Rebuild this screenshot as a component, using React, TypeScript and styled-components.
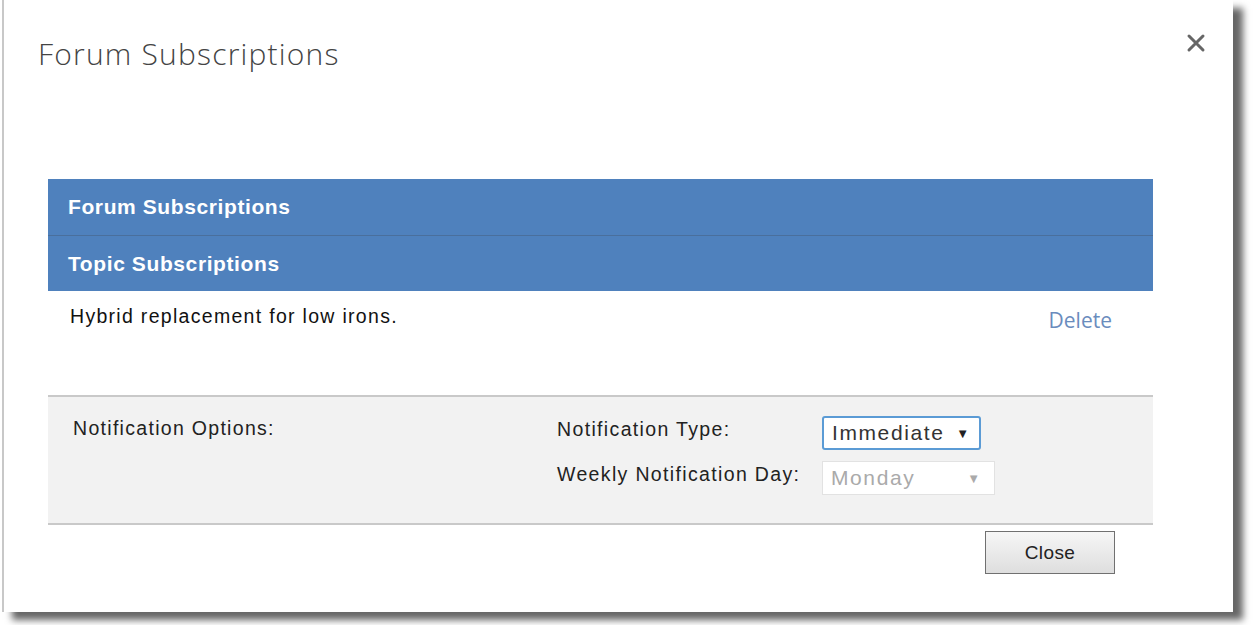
import React from 'react'
import styled, { createGlobalStyle } from 'styled-components'

const GlobalStyle = createGlobalStyle`
	html, body {
		margin: 0;
		padding: 0;
		background: #fff;
	}
	body {
		font-family: 'Liberation Sans', Arial, sans-serif;
		overflow: hidden;
	}
`

const App = (): JSX.Element => {
	return (
		<>
			<GlobalStyle />
			<Page>
				<Dialog>
					<TitleRow>
						<Title>Forum Subscriptions</Title>
						<CloseX aria-label="Close">
							<svg width="20" height="20" viewBox="0 0 20 20">
								<path d="M3 3 L17 17 M17 3 L3 17" stroke="#666" strokeWidth="3" strokeLinecap="round" />
							</svg>
						</CloseX>
					</TitleRow>
					<Content>
						<SectionHeader>Forum Subscriptions</SectionHeader>
						<SectionHeader divider>Topic Subscriptions</SectionHeader>
						<TopicRow>
							<TopicName>Hybrid replacement for low irons.</TopicName>
							<DeleteLink href="#">Delete</DeleteLink>
						</TopicRow>
						<OptionsPanel>
							<OptionsLabel>Notification Options:</OptionsLabel>
							<OptionsGrid>
								<FieldLabel>Notification Type:</FieldLabel>
								<Select active>
									<span>Immediate</span>
									<Arrow>▼</Arrow>
								</Select>
								<FieldLabel>Weekly Notification Day:</FieldLabel>
								<Select wide disabled>
									<span>Monday</span>
									<Arrow disabled>▼</Arrow>
								</Select>
							</OptionsGrid>
						</OptionsPanel>
						<Footer>
							<Button>Close</Button>
						</Footer>
					</Content>
				</Dialog>
			</Page>
		</>
	)
}

export default App

const Page = styled.div`
	width: 1260px;
	height: 625px;
	padding-left: 2px;
	box-sizing: border-box;
`

const Dialog = styled.div`
	width: 1231px;
	height: 612px;
	box-sizing: border-box;
	background: #fff;
	border-left: 2px solid #c8c8c8;
	box-shadow: 10px 8px 7px rgba(0, 0, 0, 0.6);
	display: flex;
	flex-direction: column;
`

const TitleRow = styled.div`
	display: flex;
	justify-content: space-between;
	align-items: flex-start;
	padding: 33px 26px 0 34px;
	height: 179px;
	box-sizing: border-box;
`

const Title = styled.h1`
	margin: 0;
	font-family: 'Open Sans', sans-serif;
	font-weight: 300;
	font-size: 30px;
	line-height: 42px;
	color: #444;
	letter-spacing: 1.2px;
`

const CloseX = styled.button`
	border: none;
	background: none;
	padding: 0;
	margin-top: -1px;
	width: 22px;
	height: 22px;
	display: flex;
	align-items: center;
	justify-content: center;
`

const Content = styled.div`
	padding: 0 80px 0 44px;
	display: flex;
	flex-direction: column;
`

const SectionHeader = styled.div<{ divider?: boolean }>`
	background: #4f81bd;
	color: #fff;
	font-weight: bold;
	font-size: 21px;
	letter-spacing: 0.6px;
	height: 56px;
	box-sizing: border-box;
	display: flex;
	align-items: center;
	padding-left: 20px;
	border-top: ${(p) => (p.divider ? '1px solid #4a6f9c' : 'none')};
`

const TopicRow = styled.div`
	display: flex;
	justify-content: space-between;
	align-items: flex-start;
	height: 104px;
	padding: 14px 41px 0 22px;
	box-sizing: border-box;
`

const TopicName = styled.span`
	font-size: 19.5px;
	letter-spacing: 1.3px;
	color: #111;
`

const DeleteLink = styled.a`
	font-family: 'Open Sans', sans-serif;
	font-size: 21px;
	color: #6a8cbd;
	text-decoration: none;
	margin-top: 1px;
`

const OptionsPanel = styled.div`
	background: #f2f2f2;
	border-top: 2px solid #c9c9c9;
	border-bottom: 2px solid #c9c9c9;
	height: 130px;
	box-sizing: border-box;
	display: flex;
	padding: 20px 0 0 25px;
`

const OptionsLabel = styled.div`
	width: 484px;
	font-size: 19.5px;
	letter-spacing: 1.3px;
	color: #222;
`

const OptionsGrid = styled.div`
	display: grid;
	grid-template-columns: 265px auto;
	row-gap: 11px;
	align-items: center;
	align-content: start;
	margin-top: -1px;
`

const FieldLabel = styled.div`
	font-size: 19.5px;
	letter-spacing: 1.35px;
	color: #222;
	margin-bottom: 8px;
`

const Select = styled.div<{ active?: boolean; wide?: boolean; disabled?: boolean }>`
	width: ${(p) => (p.wide ? '173px' : '159px')};
	height: 34px;
	box-sizing: border-box;
	display: flex;
	align-items: center;
	justify-content: space-between;
	padding: 0 10px 0 8px;
	background: #fff;
	border: ${(p) => (p.active ? '2px solid #5b9bd5' : '1px solid #e2e2e2')};
	border-radius: ${(p) => (p.active ? '3px' : '0')};
	font-size: 21px;
	letter-spacing: 1.6px;
	color: ${(p) => (p.disabled ? '#aaa' : '#333')};
`

const Arrow = styled.span<{ disabled?: boolean }>`
	font-size: 13px;
	letter-spacing: 0;
	color: ${(p) => (p.disabled ? '#aaa' : '#222')};
	margin-right: ${(p) => (p.disabled ? '4px' : '0')};
`

const Footer = styled.div`
	display: flex;
	justify-content: flex-end;
	padding: 6px 38px 0 0;
`

const Button = styled.button`
	width: 130px;
	height: 43px;
	font-family: 'Liberation Sans', Arial, sans-serif;
	font-size: 19px;
	letter-spacing: 0.4px;
	color: #222;
	background: linear-gradient(#f6f6f6, #dedede);
	border: 1px solid #707070;
	border-radius: 0;
`
